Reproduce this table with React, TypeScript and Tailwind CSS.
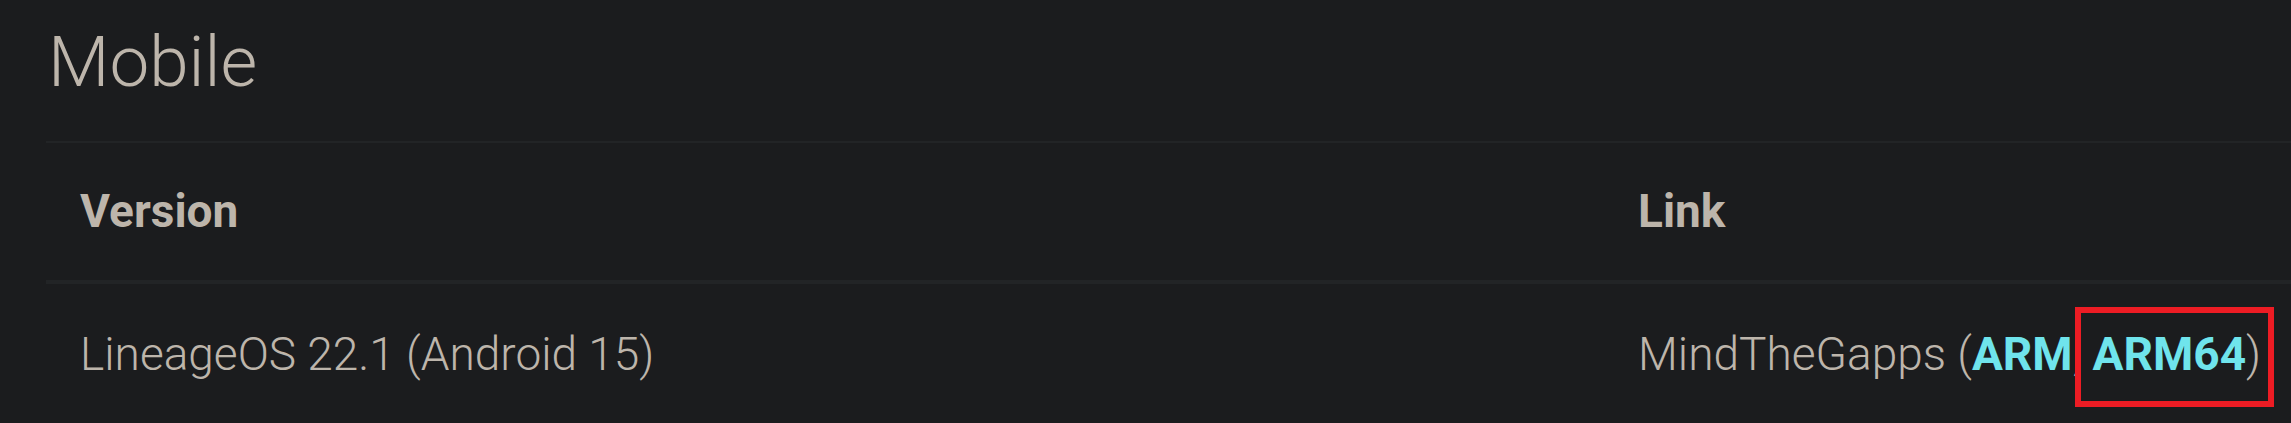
import React from "react";

const rows = [
  {
    version: "LineageOS 22.1 (Android 15)",
    name: "MindTheGapps",
    links: ["ARM", "ARM64"],
  },
];

export default function App() {
  return (
    <div
      className="min-h-screen bg-[#1b1c1e] pl-[46px] text-[#bdb5ab] overflow-hidden"
      style={{ fontFamily: "Roboto, 'Liberation Sans', sans-serif" }}
    >
      <h1 className="pt-[19px] pl-[2px] text-[71px] leading-[1.2] font-light">Mobile</h1>
      <div className="mt-[37px] w-[2260px] border-t-2 border-[#222426]">
        <div className="grid grid-cols-[1556px_1fr] border-b-4 border-[#222426]">
          <div className="px-[34px] pt-[34px] pb-[34px] text-[46px] leading-[69px] font-bold">Version</div>
          <div className="px-[36px] pt-[34px] pb-[34px] text-[46px] leading-[69px] font-bold">Link</div>
        </div>
        {rows.map((r) => (
          <div key={r.version} className="grid grid-cols-[1556px_1fr]">
            <div className="px-[34px] pt-[36px] pb-[34px] text-[46px] leading-[69px] font-light whitespace-nowrap">
              {r.version}
            </div>
            <div className="px-[36px] pt-[36px] pb-[34px] text-[46px] leading-[69px] font-light whitespace-nowrap">
              {r.name} (
              <a className="font-bold text-[#6fe4ec]">{r.links[0]}</a>,{" "}
              <span className="relative">
                <a className="font-bold text-[#6fe4ec]">{r.links[1]}</a>)
                <span className="absolute left-[-18px] right-[-13px] top-[-20px] bottom-[-26px] border-[6px] border-[#ed1c24]"></span>
              </span>
            </div>
          </div>
        ))}
      </div>
    </div>
  );
}
